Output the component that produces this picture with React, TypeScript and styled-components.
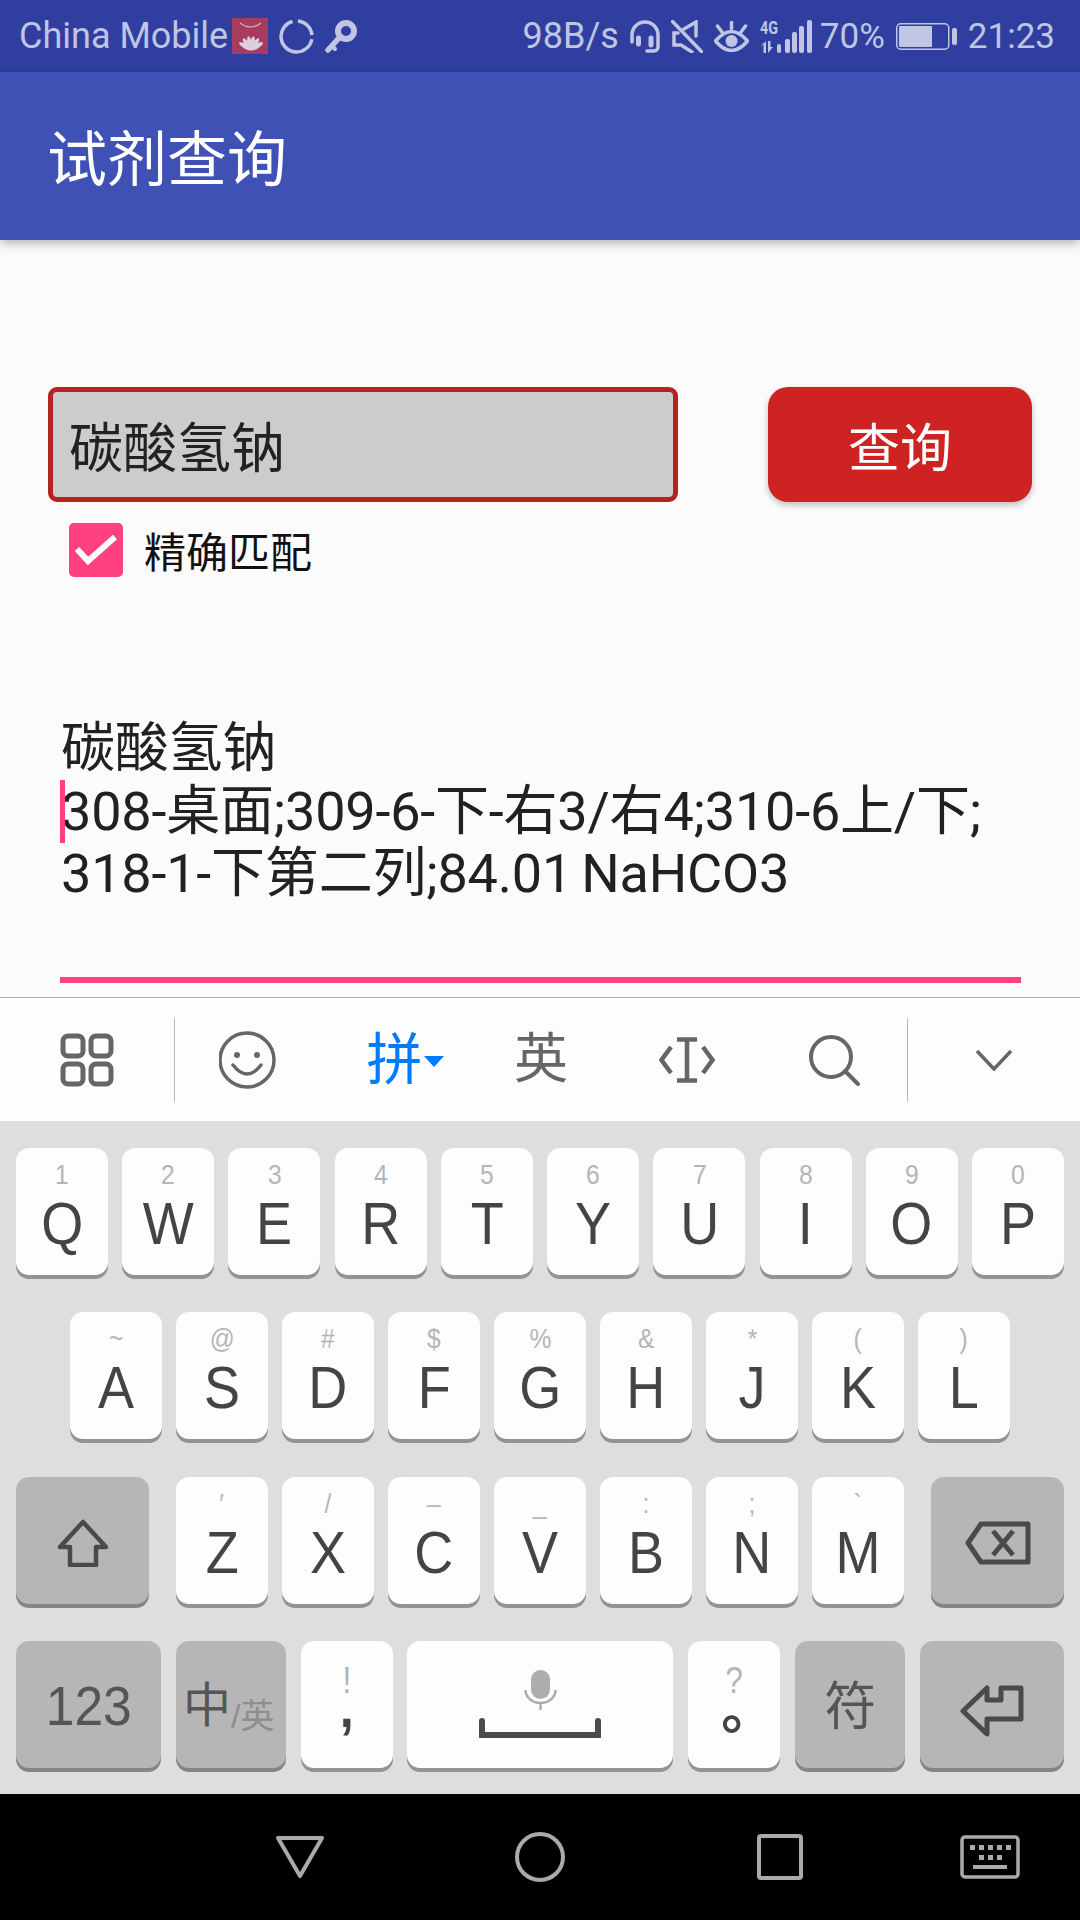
import React from 'react';
import styled, { createGlobalStyle } from 'styled-components';

const GlobalStyle = createGlobalStyle`
  html,
  body {
    margin: 0;
    padding: 0;
    background: #fbfbfb;
  }

  * {
    box-sizing: border-box;
  }
`;

const CJK_STACK = `Roboto, "Noto Sans CJK SC", sans-serif`;
const KEY_STACK = `"Liberation Sans", "Noto Sans CJK SC", sans-serif`;
const STATUS_INK = '#bfc5e3';

const Screen = styled.div`
  width: 1080px;
  height: 1920px;
  display: flex;
  flex-direction: column;
  background: #fbfbfb;
  font-family: ${CJK_STACK};
  overflow: hidden;
`;

const StatusBar = styled.div`
  height: 72px;
  flex: none;
  background: #303f9f;
  color: ${STATUS_INK};
  font-size: 36px;
  display: flex;
  align-items: center;
  justify-content: space-between;
  padding: 0 25px 0 19px;
`;

const StatusGroup = styled.div`
  display: flex;
  align-items: center;
  gap: 11px;
`;

const StatusRight = styled(StatusGroup)`
  font-size: 35px;
`;

const CarrierLabel = styled.span`
  margin-right: -7px;
`;

const SpeedLabel = styled.span`
  font-size: 36px;
`;

const BatteryLabel = styled.span`
  margin-left: -3px;
`;

const AppBar = styled.div`
  height: 168px;
  flex: none;
  background: #3f51b5;
  color: #fff;
  font-size: 60px;
  display: flex;
  align-items: center;
  padding: 0 0 4px 47px;
  box-shadow: 0 3px 10px rgba(0, 0, 0, 0.3);
  position: relative;
`;

const Content = styled.div`
  height: 757px;
  flex: none;
  padding: 147px 48px 0 48px;
  display: flex;
  flex-direction: column;
`;

const SearchRow = styled.div`
  display: flex;
  justify-content: space-between;
`;

const SearchField = styled.div`
  width: 630px;
  height: 115px;
  background: #cccccc;
  border: 5px solid #b52222;
  border-radius: 9px;
  font-size: 54px;
  color: #222;
  display: flex;
  align-items: center;
  padding-left: 16px;
`;

const SearchButton = styled.div`
  width: 264px;
  height: 115px;
  background: #cf2222;
  border-radius: 20px;
  color: #fff;
  font-size: 52px;
  display: flex;
  align-items: center;
  justify-content: center;
  box-shadow: 0 3px 6px rgba(0, 0, 0, 0.25);
`;

const ExactRow = styled.div`
  display: flex;
  align-items: center;
  gap: 21px;
  height: 54px;
  margin: 21px 0 0 21px;
  font-size: 42px;
  line-height: 54px;
  color: #111;
`;

const ExactLabel = styled.span`
  margin: 4px 0 -4px;
`;

const CheckBox = styled.div`
  width: 54px;
  height: 54px;
  background: #ff4081;
  border-radius: 5px;
  display: flex;
  align-items: center;
  justify-content: center;
`;

const ResultBlock = styled.div`
  position: relative;
  margin: 141px 0 0 13px;
  font-size: 54px;
  line-height: 62.5px;
  letter-spacing: -0.2px;
  word-spacing: -4px;
  color: #212121;
  height: 259px;
  width: 960px;
`;

const Caret = styled.span`
  position: absolute;
  left: -1px;
  top: 62px;
  width: 5px;
  height: 63px;
  background: #ff4081;
`;

const ResultLine = styled.div`
  white-space: nowrap;
`;

const Underline = styled.div`
  width: 961px;
  height: 6px;
  margin-left: 12px;
  background: #ff4081;
`;

const Toolbar = styled.div`
  height: 124px;
  flex: none;
  display: flex;
  align-items: center;
  background: #fdfdfd;
  border-top: 1px solid #a9a9b2;
`;

const ToolEnd = styled.div<{ $w: number }>`
  width: ${(p) => p.$w}px;
  flex: none;
  display: flex;
  justify-content: center;
`;

const ToolDivider = styled.div`
  width: 1px;
  height: 84px;
  flex: none;
  background: #b9b9b9;
`;

const ToolSlot = styled.div<{ $active?: boolean }>`
  flex: 1;
  position: relative;
  display: flex;
  justify-content: center;
  align-items: center;
  font-size: ${(p) => (p.$active ? 56 : 54)}px;
  line-height: 60px;
  color: ${(p) => (p.$active ? '#007aff' : '#666')};
`;

const DropArrow = styled.span`
  position: absolute;
  left: 103px;
  top: 26px;
  border-left: 10px solid transparent;
  border-right: 10px solid transparent;
  border-top: 11px solid #007aff;
`;

const Keyboard = styled.div`
  height: 673px;
  flex: none;
  background: #dedede;
  padding: 27px 16px 0;
  display: flex;
  flex-direction: column;
  gap: 37.3px;
`;

const KeyRow = styled.div<{ $spread?: boolean; $inset?: number }>`
  display: flex;
  gap: 14px;
  justify-content: ${(p) => (p.$spread ? 'space-between' : 'flex-start')};
  padding-left: ${(p) => p.$inset ?? 0}px;
`;

const LetterGroup = styled.div`
  display: flex;
  gap: 14px;
`;

const Key = styled.div<{ $w: number; $dark?: boolean; $nudge?: number }>`
  width: ${(p) => p.$w}px;
  height: 127px;
  flex: none;
  border-radius: 13px;
  background: ${(p) => (p.$dark ? '#b6b6b6' : '#fdfdfd')};
  box-shadow: 0 4px 0 ${(p) => (p.$dark ? '#858585' : '#939393')};
  color: #444;
  font-family: ${KEY_STACK};
  display: flex;
  flex-direction: column;
  align-items: center;
  justify-content: ${(p) => (p.$dark ? 'center' : 'flex-start')};
  padding-top: ${(p) => (p.$nudge ?? 0) * 2}px;
`;

const KeyHint = styled.div`
  height: 36px;
  margin-top: 9px;
  font-size: 28px;
  line-height: 36px;
  color: #b5b5b5;
  transform: scaleX(0.88);
`;

const PunctHint = styled(KeyHint)`
  margin: 22px 0 -13px;
  font-size: 36px;
`;

const KeyLetter = styled.div`
  font-size: 60px;
  line-height: 60px;
  margin-top: 1px;
  transform: scaleX(0.9);
`;

const Comma = styled(KeyLetter)`
  margin-top: -8px;
  font-size: 56px;
  font-weight: 700;
`;

const FullStop = styled(KeyLetter)`
  margin-top: -6px;
  font-size: 54px;
  font-weight: 700;
  transform: translateX(14px);
`;

const DarkLabel = styled.div`
  font-size: 56px;
  line-height: 60px;
  color: #555;
  margin-top: 4px;
  display: flex;
  align-items: flex-end;
  transform: scaleX(0.92);
`;

const SymbolLabel = styled(DarkLabel)`
  font-size: 52px;
  margin-top: 0;
  transform: none;
`;

const SwitchLabel = styled(DarkLabel)`
  margin-right: 4px;
  transform: none;
`;

const SwitchMain = styled.span`
  font-size: 48px;
  line-height: 58px;
  color: #555;
`;

const SwitchSub = styled.span`
  font-size: 34px;
  line-height: 38px;
  color: #8e8e8e;
`;

const NavBar = styled.div`
  height: 126px;
  flex: none;
  background: #000;
  padding-left: 180px;
  display: grid;
  grid-template-columns: 240px 240px 240px 180px;
  align-items: center;
  justify-items: center;
`;

const Ink = styled.svg`
  display: block;
  flex: none;
`;

const SpaceInk = styled(Ink)`
  margin-top: 29px;
`;

const HuaweiIcon = () => (
  <Ink width="36" height="36" viewBox="0 0 36 36">
    <rect width="36" height="36" fill="#a63c5e" />
    <path d="M8 5q10.500 8 21 0" fill="none" stroke="#d5b6c6" strokeWidth="1.200" />
    <g fill="#ddd0dc">
      {[-58, -34, -11, 11, 34, 58].map((angle) => (
        <ellipse key={angle} cx="19" cy="25" rx="2.200" ry="7" transform={`rotate(${angle} 19 32)`} />
      ))}
    </g>
  </Ink>
);

const SyncRing = () => (
  <Ink width="35" height="35" viewBox="0 0 35 35" fill="none" stroke={STATUS_INK} strokeWidth="3.500">
    <path d="M32.800 20.200A15.500 15.500 0 1 1 13.500 2.500" />
    <path d="M18.850 2.060A15.500 15.500 0 0 1 32.900 16.100" />
  </Ink>
);

const KeyIcon = () => (
  <Ink width="32" height="33" viewBox="0 0 32 33" fill="none" stroke={STATUS_INK}>
    <circle cx="21" cy="11" r="8" strokeWidth="6" />
    <path d="M14 18L3 30" strokeWidth="5.500" strokeLinecap="round" />
    <path d="M7 26l3 3" strokeWidth="4" strokeLinecap="round" />
  </Ink>
);

const HeadsetIcon = () => (
  <Ink width="30" height="33" viewBox="0 0 30 33" fill="none" stroke={STATUS_INK} strokeWidth="3.500" strokeLinecap="round">
    <path d="M2 22V15a13 13 0 0 1 26 0v12a4 4 0 0 1-4 4h-7" />
    <path d="M8.500 18v6M21 18v7" strokeWidth="5" />
  </Ink>
);

const MuteIcon = () => (
  <Ink width="32" height="33" viewBox="0 0 32 33" fill="none" stroke={STATUS_INK} strokeWidth="3.500" strokeLinecap="round">
    <path d="M1.500 1.500l29 30" />
    <path d="M7 13H3v12h7l11 7M13 9l12-7v14" />
  </Ink>
);

const EyeIcon = () => (
  <Ink width="35" height="31" viewBox="0 0 35 31" fill="none" stroke={STATUS_INK} strokeWidth="3.500" strokeLinecap="round">
    <path d="M1.500 20Q17.500 1 33.500 20Q17.500 39 1.500 20z" />
    <circle cx="17.500" cy="20" r="6" fill={STATUS_INK} stroke="none" />
    <path d="M17.500 1.500v6M3.500 5l4.500 6M31.500 5L27 11" />
  </Ink>
);

const SignalIcon = () => (
  <Ink width="52" height="33" viewBox="0 0 52 33" fill={STATUS_INK}>
    <text x="0" y="14" fontFamily="Roboto, sans-serif" fontSize="18" fontWeight="700" transform="scale(0.8 1)">
      4G
    </text>
    <path d="M3.500 22v11h2.500V21L1 27z" />
    <path d="M8 21v12l5-6H10.500V21z" />
    <rect x="17" y="24" width="4" height="9" rx="2" />
    <rect x="25" y="19" width="5" height="14" rx="2" />
    <rect x="32" y="12" width="5" height="21" rx="2" />
    <rect x="39" y="6" width="5" height="27" rx="2" />
    <rect x="47" y="0" width="5" height="33" rx="2" />
  </Ink>
);

const BatteryIcon = () => (
  <Ink width="61" height="27" viewBox="0 0 61 27" fill={STATUS_INK}>
    <rect x="0.750" y="0.750" width="52" height="25.500" rx="4" fill="none" stroke={STATUS_INK} strokeWidth="1.500" />
    <rect x="3" y="3" width="33" height="21" rx="1" />
    <rect x="56" y="5" width="5" height="17" rx="2" />
  </Ink>
);

const GridIcon = () => (
  <Ink width="54" height="54" viewBox="0 0 54 54" fill="none" stroke="#666" strokeWidth="5">
    <rect x="3" y="3" width="20" height="20" rx="5" />
    <rect x="31" y="3" width="20" height="20" rx="5" />
    <rect x="3" y="31" width="20" height="20" rx="5" />
    <rect x="31" y="31" width="20" height="20" rx="5" />
  </Ink>
);

const SmileIcon = () => (
  <Ink width="58" height="58" viewBox="0 0 58 58" fill="none" stroke="#666" strokeWidth="3.500">
    <circle cx="28" cy="29" r="27" />
    <circle cx="18" cy="24" r="3" fill="#666" stroke="none" />
    <circle cx="38" cy="24" r="3" fill="#666" stroke="none" />
    <path d="M14 34q14 18 28 0" strokeLinecap="round" />
  </Ink>
);

const CursorIcon = () => (
  <Ink width="56" height="48" viewBox="0 0 56 48" fill="none" stroke="#666" strokeWidth="4.500">
    <path d="M12 11L2.500 24 12 37M44 11l9.500 13L44 37" />
    <path d="M28 2v44M18 3.500h20M18 44.500h20" />
  </Ink>
);

const SearchIcon = () => (
  <Ink width="52" height="52" viewBox="0 0 52 52" fill="none" stroke="#666" strokeWidth="4">
    <circle cx="23" cy="23" r="20" />
    <path d="M37 37l13 13" strokeLinecap="round" />
  </Ink>
);

const ChevronIcon = () => (
  <Ink width="38" height="22" viewBox="0 0 38 22" fill="none" stroke="#666" strokeWidth="3.500">
    <path d="M2 2l17 18L36 2" />
  </Ink>
);

const ShiftIcon = () => (
  <Ink width="52" height="48" viewBox="0 0 52 48" fill="none" stroke="#4a4a4a" strokeWidth="4.500">
    <path d="M26 3L3 28h10v18h26V28h10z" strokeLinejoin="round" />
  </Ink>
);

const BackspaceIcon = () => (
  <Ink width="66" height="44" viewBox="0 0 66 44" fill="none" stroke="#4a4a4a" strokeWidth="5">
    <path d="M16 3h47v38H16L3 22z" strokeLinejoin="round" />
    <path d="M28 10l20 24M48 10L28 34" />
  </Ink>
);

const EnterIcon = () => (
  <Ink width="64" height="52" viewBox="0 0 64 52" fill="none" stroke="#4a4a4a" strokeWidth="5">
    <path d="M3 26L27 3v12h14V3h20v31H27v15z" strokeLinejoin="round" />
  </Ink>
);

const SpaceIcon = () => (
  <SpaceInk width="122" height="68" viewBox="0 0 122 68">
    <rect x="52" y="0" width="19" height="29" rx="9.500" fill="#adadad" />
    <path d="M46.500 20a15 13 0 0 0 30 0M61.500 33v7" fill="none" stroke="#adadad" strokeWidth="2.500" />
    <path d="M3 51v14h116V51" fill="none" stroke="#4c4c4c" strokeWidth="6" strokeLinecap="round" />
  </SpaceInk>
);

const BackIcon = () => (
  <Ink width="50" height="44" viewBox="0 0 50 44" fill="none" stroke="#aaa" strokeWidth="4">
    <path d="M3 3h44L25 41z" strokeLinejoin="round" />
  </Ink>
);

const HomeIcon = () => (
  <Ink width="50" height="50" viewBox="0 0 50 50" fill="none" stroke="#aaa" strokeWidth="4">
    <circle cx="25" cy="25" r="23" />
  </Ink>
);

const RecentIcon = () => (
  <Ink width="46" height="46" viewBox="0 0 46 46" fill="none" stroke="#aaa" strokeWidth="4">
    <rect x="2" y="2" width="42" height="42" rx="2" />
  </Ink>
);

const KeyboardIcon = () => (
  <Ink width="60" height="44" viewBox="0 0 60 44">
    <rect x="2" y="2" width="56" height="40" rx="3" fill="none" stroke="#aaa" strokeWidth="3.500" />
    <g fill="#aaa">
      {[10, 19, 28, 37, 46].map((x) => (
        <rect key={x} x={x} y="10" width="5" height="5" />
      ))}
      {[19, 28, 37].map((x) => (
        <rect key={x} x={x} y="20" width="5" height="5" />
      ))}
      <rect x="13" y="30" width="34" height="4" />
    </g>
  </Ink>
);

const rowOne = [
  ['Q', '1'],
  ['W', '2'],
  ['E', '3'],
  ['R', '4'],
  ['T', '5'],
  ['Y', '6'],
  ['U', '7'],
  ['I', '8'],
  ['O', '9'],
  ['P', '0'],
];

const rowTwo = [
  ['A', '~'],
  ['S', '@'],
  ['D', '#'],
  ['F', '$'],
  ['G', '%'],
  ['H', '&'],
  ['J', '*'],
  ['K', '('],
  ['L', ')'],
];

const rowThree = [
  ['Z', '\u2032'],
  ['X', '/'],
  ['C', '\u2013'],
  ['V', '_'],
  ['B', ':'],
  ['N', ';'],
  ['M', '`'],
];

const KEY_WIDTH = 92;

const LetterKey: React.FC<{ letter: string; hint: string }> = ({ letter, hint }) => (
  <Key $w={KEY_WIDTH}>
    <KeyHint>{hint}</KeyHint>
    <KeyLetter>{letter}</KeyLetter>
  </Key>
);

const App: React.FC = () => (
  <Screen>
    <GlobalStyle />
    <StatusBar>
      <StatusGroup>
        <CarrierLabel>China Mobile</CarrierLabel>
        <HuaweiIcon />
        <SyncRing />
        <KeyIcon />
      </StatusGroup>
      <StatusRight>
        <SpeedLabel>98B/s</SpeedLabel>
        <HeadsetIcon />
        <MuteIcon />
        <EyeIcon />
        <SignalIcon />
        <BatteryLabel>70%</BatteryLabel>
        <BatteryIcon />
        <span>21:23</span>
      </StatusRight>
    </StatusBar>
    <AppBar>试剂查询</AppBar>
    <Content>
      <SearchRow>
        <SearchField>碳酸氢钠</SearchField>
        <SearchButton>查询</SearchButton>
      </SearchRow>
      <ExactRow>
        <CheckBox>
          <Ink width="42" height="32" viewBox="0 0 42 32" fill="none" stroke="#fff" strokeWidth="6">
            <path d="M2 15l11 12L40 3" />
          </Ink>
        </CheckBox>
        <ExactLabel>精确匹配</ExactLabel>
      </ExactRow>
      <ResultBlock>
        <Caret />
        <ResultLine>碳酸氢钠</ResultLine>
        <ResultLine>308-桌面;309-6-下-右3/右4;310-6上/下;</ResultLine>
        <ResultLine>318-1-下第二列;84.01 NaHCO3</ResultLine>
      </ResultBlock>
      <Underline />
    </Content>
    <Toolbar>
      <ToolEnd $w={174}>
        <GridIcon />
      </ToolEnd>
      <ToolDivider />
      <ToolSlot>
        <SmileIcon />
      </ToolSlot>
      <ToolSlot $active>
        拼
        <DropArrow />
      </ToolSlot>
      <ToolSlot>英</ToolSlot>
      <ToolSlot>
        <CursorIcon />
      </ToolSlot>
      <ToolSlot>
        <SearchIcon />
      </ToolSlot>
      <ToolDivider />
      <ToolEnd $w={172}>
        <ChevronIcon />
      </ToolEnd>
    </Toolbar>
    <Keyboard>
      <KeyRow $spread>
        {rowOne.map(([letter, hint]) => (
          <LetterKey key={letter} letter={letter} hint={hint} />
        ))}
      </KeyRow>
      <KeyRow $inset={54}>
        {rowTwo.map(([letter, hint]) => (
          <LetterKey key={letter} letter={letter} hint={hint} />
        ))}
      </KeyRow>
      <KeyRow $spread>
        <Key $w={133} $dark $nudge={3}>
          <ShiftIcon />
        </Key>
        <LetterGroup>
          {rowThree.map(([letter, hint]) => (
            <LetterKey key={letter} letter={letter} hint={hint} />
          ))}
        </LetterGroup>
        <Key $w={133} $dark $nudge={3}>
          <BackspaceIcon />
        </Key>
      </KeyRow>
      <KeyRow $spread>
        <Key $w={145} $dark>
          <DarkLabel>123</DarkLabel>
        </Key>
        <Key $w={110} $dark>
          <SwitchLabel>
            <SwitchMain>中</SwitchMain>
            <SwitchSub>/英</SwitchSub>
          </SwitchLabel>
        </Key>
        <Key $w={KEY_WIDTH}>
          <PunctHint>!</PunctHint>
          <Comma>,</Comma>
        </Key>
        <Key $w={266}>
          <SpaceIcon />
        </Key>
        <Key $w={KEY_WIDTH}>
          <PunctHint>?</PunctHint>
          <FullStop>。</FullStop>
        </Key>
        <Key $w={110} $dark $nudge={3}>
          <SymbolLabel>符</SymbolLabel>
        </Key>
        <Key $w={144} $dark $nudge={7}>
          <EnterIcon />
        </Key>
      </KeyRow>
    </Keyboard>
    <NavBar>
      <BackIcon />
      <HomeIcon />
      <RecentIcon />
      <KeyboardIcon />
    </NavBar>
  </Screen>
);

export default App;
